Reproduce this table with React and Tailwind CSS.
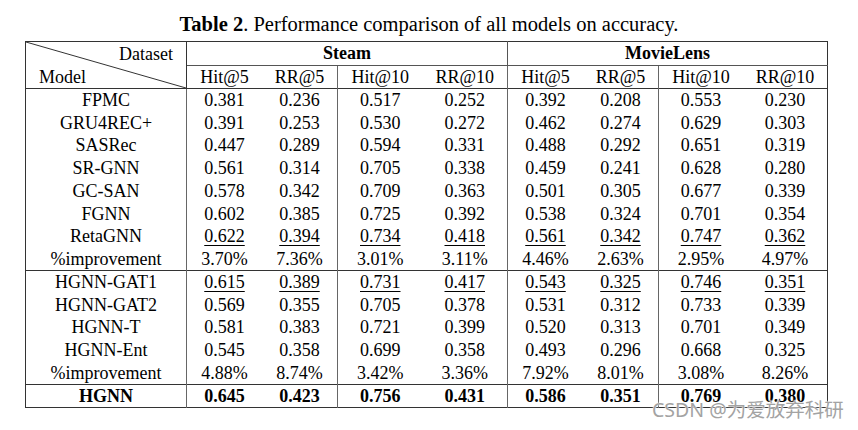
import React from "react";

const groupA = [
  ["FPMC", "0.381", "0.236", "0.517", "0.252", "0.392", "0.208", "0.553", "0.230"],
  ["GRU4REC+", "0.391", "0.253", "0.530", "0.272", "0.462", "0.274", "0.629", "0.303"],
  ["SASRec", "0.447", "0.289", "0.594", "0.331", "0.488", "0.292", "0.651", "0.319"],
  ["SR-GNN", "0.561", "0.314", "0.705", "0.338", "0.459", "0.241", "0.628", "0.280"],
  ["GC-SAN", "0.578", "0.342", "0.709", "0.363", "0.501", "0.305", "0.677", "0.339"],
  ["FGNN", "0.602", "0.385", "0.725", "0.392", "0.538", "0.324", "0.701", "0.354"],
  ["RetaGNN", "0.622", "0.394", "0.734", "0.418", "0.561", "0.342", "0.747", "0.362", true],
  ["%improvement", "3.70%", "7.36%", "3.01%", "3.11%", "4.46%", "2.63%", "2.95%", "4.97%"],
];

const groupB = [
  ["HGNN-GAT1", "0.615", "0.389", "0.731", "0.417", "0.543", "0.325", "0.746", "0.351", true],
  ["HGNN-GAT2", "0.569", "0.355", "0.705", "0.378", "0.531", "0.312", "0.733", "0.339"],
  ["HGNN-T", "0.581", "0.383", "0.721", "0.399", "0.520", "0.313", "0.701", "0.349"],
  ["HGNN-Ent", "0.545", "0.358", "0.699", "0.358", "0.493", "0.296", "0.668", "0.325"],
  ["%improvement", "4.88%", "8.74%", "3.42%", "3.36%", "7.92%", "8.01%", "3.08%", "8.26%"],
];

// columns that carry a vertical rule on their right side
const ruled = [0, 2, 4, 6];
const metrics = ["Hit@5", "RR@5", "Hit@10", "RR@10"];

function Row({ cells, last, bold }) {
  const under = cells[9] === true;
  return (
    <tr className={last ? "border-b border-[#333]" : ""}>
      {cells.slice(0, 9).map((c, i) => (
        <td
          key={i}
          className={
            "h-[22.75px] p-0 text-center " +
            (ruled.includes(i) ? "border-r border-[#666] " : "") +
            (bold ? "font-bold" : "")
          }
        >
          {under && i > 0 ? (
            <span className="underline decoration-1 underline-offset-[3px]">{c}</span>
          ) : (
            c
          )}
        </td>
      ))}
    </tr>
  );
}

export default function App() {
  return (
    <div
      className="relative w-[858px] h-[430px] bg-white text-black pt-[13px]"
      style={{ fontFamily: '"Liberation Serif", "Times New Roman", serif' }}
    >
      <h1 className="text-center text-[20.5px] leading-[22px] mb-[6px]">
        <span className="font-bold">Table 2</span>. Performance comparison of all models on accuracy.
      </h1>

      <table className="ml-[25px] w-[802px] table-fixed border-collapse border border-[#333] text-[18px] leading-[20px]">
        <colgroup>
          <col className="w-[161px]" />
          <col className="w-[75.5px]" />
          <col className="w-[75.5px]" />
          <col className="w-[85px]" />
          <col className="w-[85px]" />
          <col className="w-[75.5px]" />
          <col className="w-[75.5px]" />
          <col className="w-[84.5px]" />
          <col className="w-[84.5px]" />
        </colgroup>
        <thead>
          <tr>
            <td rowSpan={2} className="relative p-0 border-r border-b border-[#333] align-top">
              <svg
                className="absolute inset-0 w-full h-full"
                viewBox="0 0 100 100"
                preserveAspectRatio="none"
              >
                <line x1="0" y1="0" x2="100" y2="100" stroke="#333" strokeWidth="1" vectorEffect="non-scaling-stroke" />
              </svg>
              <div className="h-[23px] flex items-center justify-end pr-[13px]">Dataset</div>
              <div className="h-[23px] flex items-center pl-[13px]">Model</div>
            </td>
            <td colSpan={4} className="h-[23px] p-0 text-center font-bold border-r border-b border-[#555]">
              Steam
            </td>
            <td colSpan={4} className="h-[23px] p-0 text-center font-bold border-b border-[#555]">
              MovieLens
            </td>
          </tr>
          <tr className="border-b border-[#333]">
            {[...metrics, ...metrics].map((m, i) => (
              <td
                key={i}
                className={
                  "h-[23px] p-0 text-center " +
                  (i === 1 || i === 3 || i === 5 ? "border-r border-[#666]" : "")
                }
              >
                {m}
              </td>
            ))}
          </tr>
        </thead>
        <tbody>
          {groupA.map((r, i) => (
            <Row key={r[0] + i} cells={r} last={i === groupA.length - 1} />
          ))}
          {groupB.map((r, i) => (
            <Row key={r[0] + i} cells={r} last={i === groupB.length - 1} />
          ))}
          <Row cells={["HGNN", "0.645", "0.423", "0.756", "0.431", "0.586", "0.351", "0.769", "0.380"]} bold />
        </tbody>
      </table>

      {/* watermark sits over the bottom border, as in the source image */}
      <div
        className="absolute left-[652px] top-[400px] text-[19.5px] leading-[20px] text-[#a3a3a3] whitespace-nowrap"
        style={{
          fontFamily: '"Noto Sans", "Noto Sans CJK SC", sans-serif',
          textShadow: "0 0 2px #fff, 0 0 1px #fff",
        }}
      >
        CSDN @为爱放弃科研
      </div>
    </div>
  );
}
